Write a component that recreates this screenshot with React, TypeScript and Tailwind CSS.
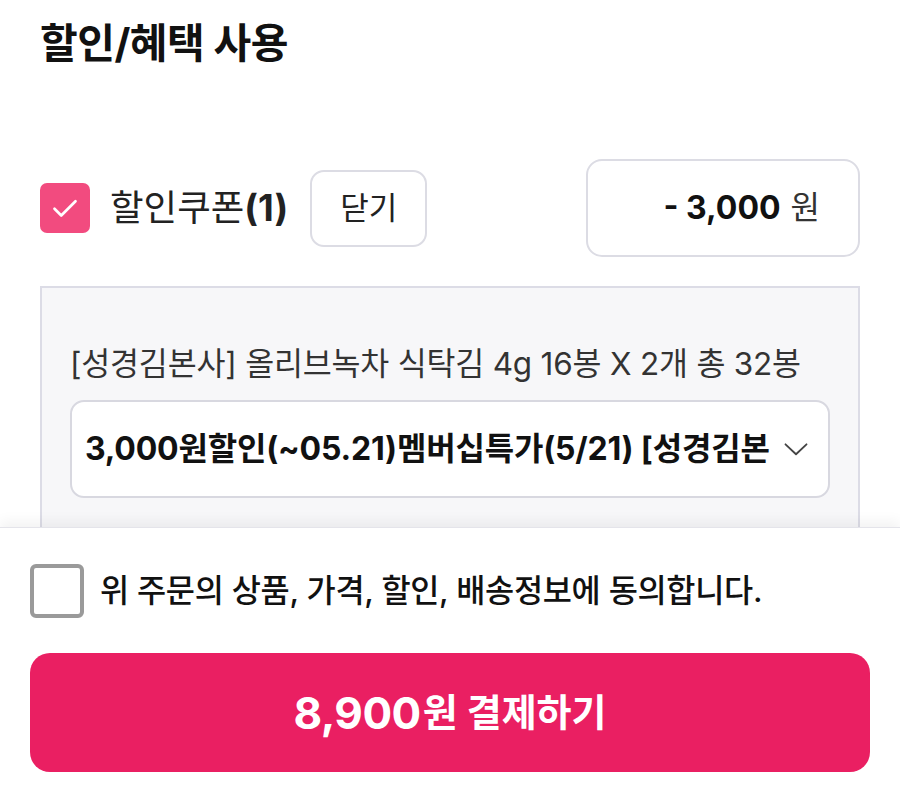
import React, { useState } from "react";

const font = {
  fontFamily: '"Inter", "Noto Sans CJK KR", "Noto Sans", sans-serif',
};

function CheckIcon() {
  return (
    <svg viewBox="0 0 24 24" className="w-[36px] h-[36px]" fill="none">
      <path
        d="M5 12.5l4.5 4.5L19 7.5"
        stroke="white"
        strokeWidth="1.8"
        strokeLinecap="round"
        strokeLinejoin="round"
      />
    </svg>
  );
}

function Chevron() {
  return (
    <svg viewBox="0 0 24 24" className="w-[28px] h-[28px] shrink-0" fill="none">
      <path
        d="M3 8l9 8.5L21 8"
        stroke="#444"
        strokeWidth="1.6"
        strokeLinecap="round"
        strokeLinejoin="round"
      />
    </svg>
  );
}

export default function App() {
  const [agree, setAgree] = useState(false);
  const [couponOn, setCouponOn] = useState(true);

  return (
    <div
      className="relative w-[900px] h-[791px] overflow-hidden bg-white text-[#111]"
      style={font}
    >
      <div className="px-10 pt-[19px]">
        {/* Heading */}
        <h1 className="text-[41px] font-bold leading-[48px] tracking-[-0.5px]">
          할인/혜택 사용
        </h1>

        {/* Coupon row */}
        <div className="mt-[92px] flex items-center h-[98px]">
          <button
            onClick={() => setCouponOn(!couponOn)}
            className="w-[50px] h-[50px] rounded-[7px] bg-[#f24b7f] flex items-center justify-center"
          >
            {couponOn && <CheckIcon />}
          </button>
          <span className="ml-[20px] text-[36.5px] leading-none text-[#222]">
            할인쿠폰<span className="font-bold">(1)</span>
          </span>
          <button className="ml-[22px] w-[117px] h-[77px] rounded-[14px] border-2 border-[#dcdce4] bg-white text-[31px] text-[#222]">
            닫기
          </button>
          <div className="ml-auto w-[274px] h-[98px] rounded-[16px] border-2 border-[#dcdce4] flex items-center justify-end pr-[38px] text-[32px]">
            <span className="font-bold">- 3,000</span>
            <span className="ml-[10px] text-[#333]">원</span>
          </div>
        </div>

        {/* Coupon panel */}
        <div className="mt-[29px] border-2 border-[#dcdce6] bg-[#f7f7f9] px-[28px] pt-[57px] pb-[40px]">
          <p className="text-[31.5px] leading-[38px] text-[#333] tracking-[-0.2px] whitespace-nowrap">
            [성경김본사] 올리브녹차 식탁김 4g 16봉 X 2개 총 32봉
          </p>
          <div className="mt-[17px] h-[98px] rounded-[14px] border-2 border-[#d8d8e0] bg-white flex items-center pl-[13px] pr-[18px] gap-[12px]">
            <span className="flex-1 overflow-hidden whitespace-nowrap text-[32px] font-bold text-[#111] tracking-[-0.2px]">
              3,000원할인(~05.21)멤버십특가(5/21) [성경김본사] 올리브녹차
            </span>
            <Chevron />
          </div>
        </div>
      </div>

      {/* Bottom sheet */}
      <div className="absolute left-0 right-0 bottom-0 h-[264px] bg-white border-t border-[#e4e4ea] shadow-[0_-6px_12px_rgba(0,0,0,0.05)] px-[30px] pt-[36px]">
        <label className="flex items-center gap-[16px] h-[54px] cursor-pointer">
          <button
            onClick={() => setAgree(!agree)}
            className="w-[54px] h-[54px] rounded-[6px] border-[4px] border-[#9a9a9a] bg-white flex items-center justify-center"
          />
          <span className="text-[31.7px] font-medium text-[#111] tracking-[-0.3px]">
            위 주문의 상품, 가격, 할인, 배송정보에 동의합니다.
          </span>
        </label>
        <button className="mt-[35px] w-full h-[119px] rounded-[20px] bg-[#ea1f62] text-white font-bold flex items-center justify-center">
          <span className="text-[44px] tracking-[-0.5px]">8,900</span>
          <span className="text-[38px] ml-[2px]">원 결제하기</span>
        </button>
      </div>
    </div>
  );
}
